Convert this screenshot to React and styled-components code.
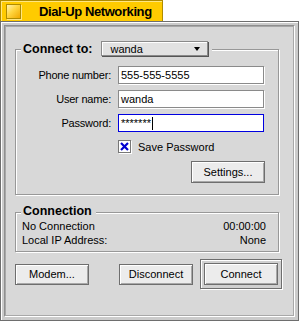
import React from 'react';
import styled, { createGlobalStyle } from 'styled-components';

const Global = createGlobalStyle`
  body {
    margin: 0;
    background: #ffffff;
    font-family: "Liberation Sans", Arial, sans-serif;
    font-size: 11px;
    color: #000;
  }
`;

const Page = styled.div`
  width: 299px;
  height: 321px;
  display: flex;
  flex-direction: column;
`;

const Tab = styled.div`
  width: 163px;
  height: 21px;
  box-sizing: border-box;
  background: #ffcb00;
  border: 1px solid #b08c00;
  border-bottom: none;
  box-shadow: inset 1px 1px 0 #ffe680;
  display: flex;
  align-items: center;
  padding-left: 5px;
  gap: 18px;
`;

const CloseBox = styled.div`
  flex-shrink: 0;
  width: 13px;
  height: 13px;
  border: 1px solid #b08c00;
  background: linear-gradient(135deg, #fff2b0 0%, #ffd640 45%, #f0a800 100%);
  box-shadow: 1px 1px 0 #ffe680;
`;

const Title = styled.div`
  font-weight: bold;
  font-size: 13px;
  letter-spacing: -0.4px;
  white-space: nowrap;
`;

const Frame = styled.div`
  flex: 1;
  box-sizing: border-box;
  border: 1px solid #6e6e6e;
  background: #cbcbcb;
  padding: 1px;
  display: flex;
  box-shadow: inset 1px 1px 0 #ffffff;
`;

const FrameInner = styled.div`
  flex: 1;
  margin: 2px;
  border: 1px solid;
  border-color: #8f8f8f #ffffff #ffffff #8f8f8f;
  display: flex;
`;

const Content = styled.div`
  flex: 1;
  background: #d8d8d8;
  border: 1px solid #a8a8a8;
  padding: 22px 14px 0 9px;
  display: flex;
  flex-direction: column;
`;

const Group = styled.div`
  position: relative;
  border: 1px solid #989898;
  box-shadow: 1px 1px 0 #ffffff, inset 1px 1px 0 #ffffff;
  padding: ${({ $pad }) => $pad};
  display: flex;
  flex-direction: column;
`;

const Legend = styled.div`
  position: absolute;
  left: 5px;
  top: ${({ $top }) => $top}px;
  background: #d8d8d8;
  padding: 0 4px 0 2px;
  display: flex;
  align-items: center;
  gap: 9px;
  font-weight: bold;
  font-size: 12.5px;
  white-space: nowrap;
`;

const Dropdown = styled.div`
  width: 107px;
  height: 15px;
  box-sizing: border-box;
  background: #e2e2e2;
  border: 1px solid #8a8a8a;
  box-shadow: 1px 1px 0 #555, inset 1px 1px 0 #fff;
  display: flex;
  align-items: center;
  justify-content: space-between;
  padding: 0 7px 0 8px;
  font-weight: normal;
  font-size: 11px;
`;

const Arrow = styled.div`
  width: 0;
  height: 0;
  border-left: 3px solid transparent;
  border-right: 3px solid transparent;
  border-top: 4px solid #000;
`;

const Row = styled.div`
  display: flex;
  align-items: center;
  height: 18px;
  margin-bottom: 6px;
`;

const Label = styled.div`
  width: 95px;
  text-align: right;
  padding-right: 7px;
  letter-spacing: -0.2px;
`;

const Input = styled.div`
  width: 146px;
  height: 18px;
  box-sizing: border-box;
  background: #fff;
  border: 1px solid ${({ $focus }) => ($focus ? '#0000e0' : '#8a8a8a')};
  box-shadow: ${({ $focus }) => ($focus ? 'none' : '1px 1px 0 #fff')};
  display: flex;
  align-items: center;
  padding-left: 2px;
`;

const Caret = styled.span`
  display: inline-block;
  width: 1px;
  height: 13px;
  background: #000;
  margin-left: 1px;
`;

const CheckRow = styled.div`
  display: flex;
  align-items: center;
  gap: 7px;
  padding-left: 102px;
  margin-top: 2px;
`;

const Check = styled.div`
  width: 13px;
  height: 13px;
  box-sizing: border-box;
  background: #fff;
  border: 1px solid #777;
  box-shadow: 1px 1px 0 #fff;
  display: flex;
  align-items: center;
  justify-content: center;
`;

const RightBar = styled.div`
  display: flex;
  justify-content: flex-end;
  margin-top: 8px;
`;

const Button = styled.div`
  flex-shrink: 0;
  width: ${({ $w }) => $w}px;
  height: ${({ $h }) => $h || 21}px;
  box-sizing: border-box;
  background: #ececec;
  border: 1px solid #6e6e6e;
  box-shadow: inset 1px 1px 0 #fff, inset -1px -1px 0 #a8a8a8;
  display: flex;
  align-items: center;
  justify-content: center;
`;

const DefaultRing = styled.div`
  flex-shrink: 0;
  padding: 3px;
  margin-right: -3px;
  border: 1px solid #6e6e6e;
  box-shadow: inset 1px 1px 0 #fff, 1px 1px 0 #fff;
  background: #d0d0d0;
`;

const InfoRow = styled.div`
  display: flex;
  justify-content: space-between;
  height: 14px;
  align-items: center;
`;

const Gap = styled.div`
  height: ${({ $h }) => $h || 0}px;
  width: ${({ $w }) => $w || 0}px;
  flex-shrink: 0;
`;

const Buttons = styled.div`
  display: flex;
  align-items: center;
  margin-top: 7px;
`;

export default function App() {
  return (
    <Page>
      <Global />
      <Tab>
        <CloseBox />
        <Title>Dial-Up Networking</Title>
      </Tab>
      <Frame>
        <FrameInner>
          <Content>
            <Group $pad="16px 13px 11px 0">
              <Legend $top={-9}>
                Connect to:
                <Dropdown>
                  wanda
                  <Arrow />
                </Dropdown>
              </Legend>
              <Row>
                <Label>Phone number:</Label>
                <Input>555-555-5555</Input>
              </Row>
              <Row>
                <Label>User name:</Label>
                <Input>wanda</Input>
              </Row>
              <Row>
                <Label>Password:</Label>
                <Input $focus>
                  *******
                  <Caret />
                </Input>
              </Row>
              <CheckRow>
                <Check>
                  <svg width="9" height="9" viewBox="0 0 9 9">
                    <path d="M1 1 L8 8 M8 1 L1 8" stroke="#0000d0" strokeWidth="2.2" />
                  </svg>
                </Check>
                Save Password
              </CheckRow>
              <RightBar>
                <Button $w={74} $h={22}>Settings...</Button>
              </RightBar>
            </Group>
            <Gap $h={17} />
            <Group $pad="6px 12px 4px 6px">
              <Legend $top={-9}>Connection</Legend>
              <InfoRow>
                <span>No Connection</span>
                <span>00:00:00</span>
              </InfoRow>
              <InfoRow>
                <span>Local IP Address:</span>
                <span>None</span>
              </InfoRow>
            </Group>
            <Buttons>
              <Button $w={74}>Modem...</Button>
              <Gap $w={30} />
              <Button $w={74}>Disconnect</Button>
              <Gap $w={7} />
              <DefaultRing>
                <Button $w={74} $h={22}>Connect</Button>
              </DefaultRing>
            </Buttons>
          </Content>
        </FrameInner>
      </Frame>
    </Page>
  );
}
